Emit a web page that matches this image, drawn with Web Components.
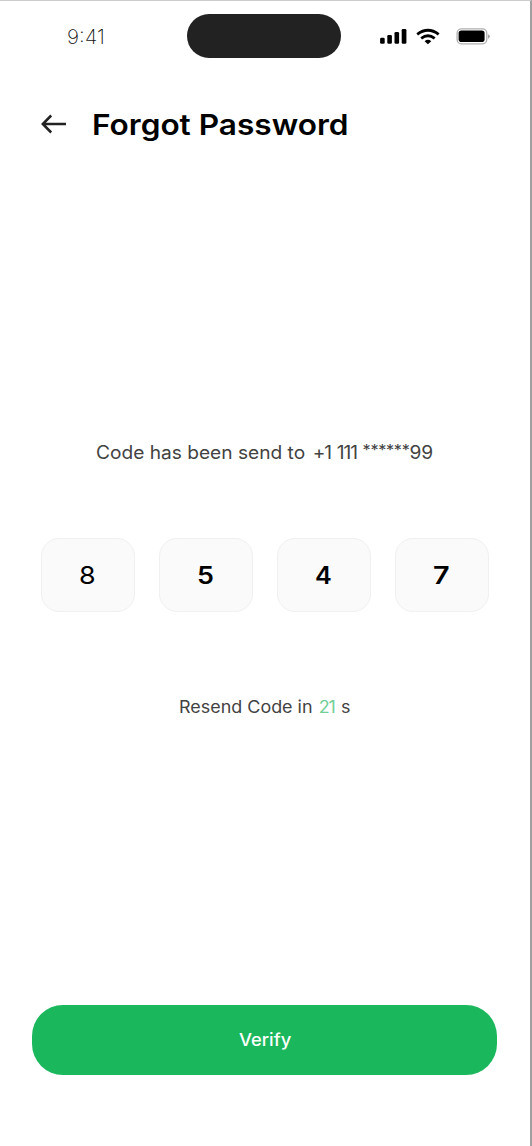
<!DOCTYPE html>
<html lang="en">
<head>
<meta charset="utf-8">
<title>Forgot Password</title>
<style>
body { margin: 0; background: #fff; font-family: Inter, "Liberation Sans", sans-serif; color: #000; }
</style>
</head>
<body>
<verify-screen></verify-screen>
<script>
const define = (name, html, setup) => customElements.define(name, class extends HTMLElement {
  constructor() {
    super();
    this.attachShadow({ mode: 'open' }).innerHTML = html;
  }
  connectedCallback() { if (setup) setup(this); }
});

/* One line of text stretched horizontally to the width given in pixels. */
define('fit-text', `
<style>
:host { display: block; white-space: nowrap; flex: none; }
span { display: inline-block; transform-origin: 0 50%; }
</style><span><slot></slot></span>`, el => {
  const span = el.shadowRoot.querySelector('span');
  const width = Number(el.getAttribute('width'));
  el.style.width = width + 'px';
  span.style.transform = `scaleX(${width / span.offsetWidth})`;
});

define('status-bar', `
<style>
:host { display: flex; box-sizing: border-box; height: 44.4px; align-items: center; padding-left: 66.5px; }
.time { font: 200 20px/44px Inter, sans-serif; color: #111; padding-top: 2px; }
.island { width: 154px; height: 44.4px; border-radius: 23px; background: #222; margin-left: 82.9px; flex: none; align-self: flex-start; }
svg { display: block; margin-left: 37px; }
</style>
<fit-text class="time" width="38">9:41</fit-text>
<div class="island"></div>
<svg width="114" height="24" viewBox="377.9 24 114 24">
  <g><rect x="380" y="37.8" width="4.6" height="6" rx="1.3"/><rect x="387.2" y="35" width="4.6" height="8.8" rx="1.3"/><rect x="394.4" y="31.9" width="4.6" height="11.9" rx="1.3"/><rect x="401.6" y="28.9" width="4.7" height="14.9" rx="1.3"/></g>
  <g fill="none" stroke="#000" stroke-width="2.8"><path d="M417.1 34.3 Q427.8 26.2 438.6 34.3"/><path d="M421.1 38.3 Q427.8 33.2 434.6 38.3"/></g>
  <path d="M424.5 41.2 Q427.8 38.3 431.2 41.2 L427.8 44.2Z"/>
  <rect x="457" y="28.9" width="29.7" height="15" rx="4.3" fill="none" stroke="#b0b0b0" stroke-width="1.3"/>
  <rect x="458.5" y="30.6" width="26" height="11.4" rx="2.8"/>
  <path d="M488 34.3 Q491.5 36.4 488 38.8Z" fill="#999"/>
</svg>`);

define('page-header', `
<style>
:host { display: flex; align-items: center; height: 40px; padding-left: 41px; }
svg { display: block; flex: none; }
h1 { margin: 2px 0 0 26.3px; font: 600 28.5px/40px Inter, sans-serif; }
</style>
<svg width="25" height="20" viewBox="0 0 25 20" fill="none" stroke="#222" stroke-width="2.5"><path d="M25 10H1.8M10.2 1.5L1.8 10L10.2 18.5"/></svg>
<h1><fit-text width="256"><slot></slot></fit-text></h1>`);

define('code-box', `
<style>
:host { display: flex; box-sizing: border-box; height: 74px; align-items: center; justify-content: center; border: 1px solid #f0f0f0; border-radius: 18px; background: #fafafa; font-size: 24px; line-height: 30px; font-weight: 620; }
:host([light]) { font-weight: 420; }
fit-text { padding-top: 2px; }
</style><fit-text width="16.8"><slot></slot></fit-text>`);

define('main-button', `
<style>
:host { display: block; }
button { display: flex; width: 100%; height: 70.3px; align-items: center; justify-content: center; border: 0; padding: 0 1px 0 0; border-radius: 31px; background: #1bb75c; color: #fff; font: 550 17.3px/24px Inter, sans-serif; }
</style><button><slot></slot></button>`);

define('verify-screen', `
<style>
:host { display: flex; flex-direction: column; box-sizing: border-box; height: 1146px; border-top: 1px solid #ccc; border-right: 2px solid #a0a0a0; padding-top: 13px; background: #fff; }
page-header { margin-top: 45.6px; }
.sent { margin: 293px 0 0 96px; font-size: 18.3px; line-height: 30px; color: #424242; }
.phone { letter-spacing: -.9px; word-spacing: 1px; margin-left: 2px; }
.stars { font-size: 15.5px; letter-spacing: -.3px; position: relative; top: -3px; line-height: 1; }
.codes { display: grid; grid-template-columns: repeat(4, 94px); column-gap: 24.1px; margin: 70.6px 0 0 40.6px; }
.resend { margin: 82px 0 0 179px; font-size: 16.8px; line-height: 26px; color: #424242; }
.resend b { font-weight: 400; color: #70cf96; letter-spacing: -1px; margin: 0 1px; }
main-button { margin: 285.2px 33.5px 0 32px; }
</style>
<status-bar></status-bar>
<page-header>Forgot Password</page-header>
<fit-text class="sent" width="337">Code has been send to <span class="phone">+1 111</span> <span class="stars">******</span>99</fit-text>
<div class="codes"><code-box light>8</code-box><code-box>5</code-box><code-box>4</code-box><code-box>7</code-box></div>
<fit-text class="resend" width="171">Resend Code in <b>21</b> s</fit-text>
<main-button><fit-text width="52">Verify</fit-text></main-button>`);
</script>
</body>
</html>
